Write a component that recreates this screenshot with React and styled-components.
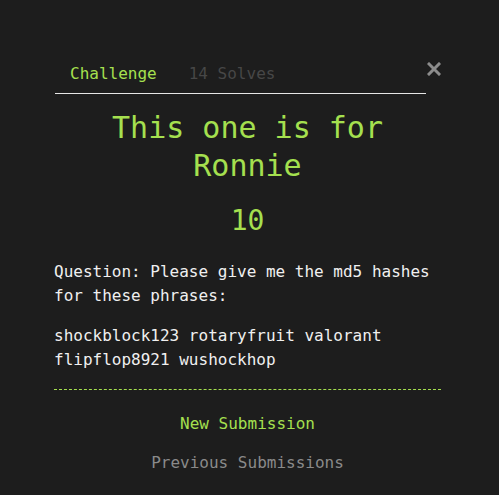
import React from 'react'
import styled, { createGlobalStyle } from 'styled-components'

const GlobalStyle = createGlobalStyle`
    body {
        margin: 0;
        background-color: #1d1d1d;
        font-family: "DejaVu Sans Mono", "Liberation Mono", monospace;
    }
`

const green = '#a5e04f'

function App() {
    return (
        <Page>
            <GlobalStyle />
            <Modal>
                <Header>
                    <Tabs>
                        <Tab active>Challenge</Tab>
                        <Tab>14 Solves</Tab>
                    </Tabs>
                    <CloseButton aria-label="Close">
                        <svg width="14" height="14" viewBox="0 0 14 14">
                            <path d="M2 2 L12 12 M12 2 L2 12" stroke="#8c8c8c" strokeWidth="3" strokeLinecap="square" />
                        </svg>
                    </CloseButton>
                </Header>

                <Title>This one is for Ronnie</Title>
                <Points>10</Points>

                <Description>Question: Please give me the md5 hashes for these phrases:</Description>
                <Description gap>shockblock123 rotaryfruit valorant flipflop8921 wushockhop</Description>

                <Divider />

                <Actions>
                    <ActionButton primary>New Submission</ActionButton>
                    <ActionButton>Previous Submissions</ActionButton>
                </Actions>
            </Modal>
        </Page>
    )
}

export default App;

const Page = styled.div`
    min-height: 495px;
    box-sizing: border-box;
    padding: 60px 0 0 54px;
`

const Modal = styled.div`
    width: 387px;
`

const Header = styled.div`
    display: flex;
    align-items: flex-start;
`

const Tabs = styled.nav`
    flex: 1;
    display: flex;
    gap: 32px;
    padding: 0 0 5px 15px;
    margin-left: 1px;
    border-bottom: 1px solid #e6e6e6;
`

const Tab = styled.span`
    font-size: 16px;
    line-height: 28px;
    color: ${props => props.active ? green : '#474747'};
`

const CloseButton = styled.button`
    width: 15px;
    height: 16px;
    margin-top: 1px;
    padding: 0;
    border: none;
    background: none;
    display: flex;
    align-items: center;
    justify-content: flex-end;
    cursor: pointer;
`

const Title = styled.h2`
    margin: 15px 0 0;
    font-size: 30px;
    line-height: 38px;
    font-weight: normal;
    text-align: center;
    color: ${green};
`

const Points = styled.h3`
    margin: 17px 0 0;
    font-size: 28px;
    line-height: 38px;
    font-weight: normal;
    text-align: center;
    color: ${green};
`

const Description = styled.p`
    margin: ${props => props.gap ? '16px' : '20px'} 0 0;
    font-size: 16px;
    line-height: 24px;
    color: #f0f0f0;
`

const Divider = styled.hr`
    margin: 17px 0 0;
    border: none;
    border-top: 1px dashed ${green};
`

const Actions = styled.div`
    display: flex;
    flex-direction: column;
    align-items: center;
    gap: 15px;
    margin-top: 22px;
`

const ActionButton = styled.button`
    padding: 0;
    border: none;
    background: none;
    font-family: inherit;
    font-size: 16px;
    line-height: 24px;
    color: ${props => props.primary ? green : '#8a8a8a'};
    cursor: pointer;
`
